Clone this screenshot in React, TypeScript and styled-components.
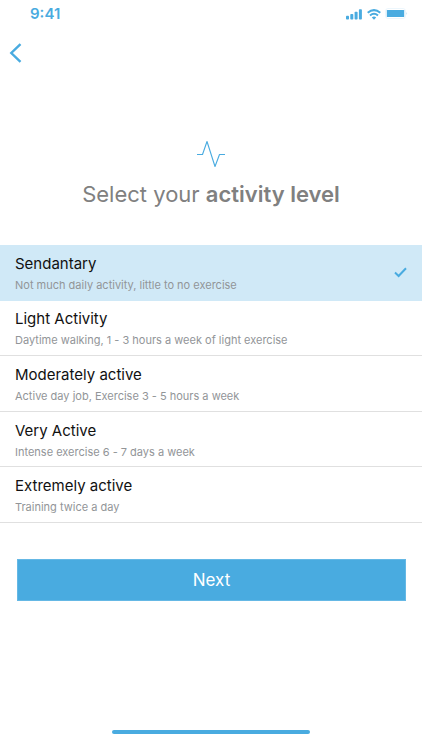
import { useState } from "react";
import styled, { createGlobalStyle } from "styled-components";

const blue = "#49abe0";

const GlobalStyle = createGlobalStyle`
  *, *::before, *::after { box-sizing: border-box; }
  body { margin: 0; background: #fff; font-family: Inter, sans-serif; }
`;

const Screen = styled.div`
  min-height: 100vh;
  display: flex;
  flex-direction: column;
  background: #fff;
`;

const StatusBar = styled.header`
  display: flex;
  align-items: center;
  justify-content: space-between;
  height: 28px;
  padding: 0 14px 0 30px;
  color: ${blue};
`;

const Clock = styled.time`
  font-size: 15px;
  line-height: 20px;
  font-weight: 600;
`;

const StatusIcons = styled.div`
  display: flex;
  align-items: center;
  gap: 4px;
`;

const Nav = styled.nav`
  display: flex;
  height: 50px;
  align-items: center;
`;

const BackButton = styled.button`
  display: flex;
  padding: 8px;
  border: 0;
  background: none;
  color: ${blue};
  cursor: pointer;
`;

const Form = styled.form`
  flex: 1;
  display: flex;
  flex-direction: column;
`;

const Intro = styled.div`
  display: flex;
  flex-direction: column;
  align-items: center;
  gap: 10px;
  padding: 62px 16px 35px;
  color: ${blue};
`;

const Title = styled.h1`
  margin: 0;
  color: #808080;
  font-size: 22px;
  line-height: 32px;
  font-weight: 400;
  text-align: center;

  strong { font-weight: 600; }
`;

const Options = styled.div`
  display: grid;
  grid-auto-rows: 1fr;
  min-height: 278px;
`;

const Option = styled.label<{ $selected: boolean }>`
  display: flex;
  align-items: center;
  justify-content: space-between;
  padding: 0 15px;
  border-bottom: 1px solid ${(p) => (p.$selected ? "#d0e9f7" : "#e0e0e0")};
  background: ${(p) => (p.$selected ? "#d0e9f7" : "#fff")};
  color: ${blue};
  cursor: pointer;
`;

const Radio = styled.input`
  appearance: none;
  width: 0;
  height: 0;
  margin: 0;
  outline: 0;
`;

const OptionText = styled.span`
  flex: 1;
  display: flex;
  flex-direction: column;
  gap: 2px;
  padding-top: 3px;
`;

const OptionName = styled.span`
  color: #111;
  font-size: 15px;
  line-height: 20px;
`;

const OptionDetail = styled.span`
  color: #929598;
  font-size: 11px;
  line-height: 18px;
`;

const NextButton = styled.button`
  margin: 36px 16px 0 17px;
  padding: 8px 16px;
  border: 1px solid #65b8e5;
  background: ${blue};
  color: #fff;
  font-family: inherit;
  font-size: 17px;
  line-height: 24px;
  cursor: pointer;
`;

const HomeArea = styled.footer`
  display: flex;
  justify-content: center;
  padding: 16px;
`;

const HomeIndicator = styled.div`
  width: 47vw;
  height: 4px;
  border-radius: 2px;
  background: ${blue};
`;

const levels = [
  { name: "Sendantary", detail: "Not much daily activity, little to no exercise" },
  { name: "Light Activity", detail: "Daytime walking, 1 - 3 hours a week of light exercise" },
  { name: "Moderately active", detail: "Active day job, Exercise 3 - 5 hours a week" },
  { name: "Very Active", detail: "Intense exercise 6 - 7 days a week" },
  { name: "Extremely active", detail: "Training twice a day" },
];

const SignalIcon = () => (
  <svg width="17" height="11" viewBox="0 0 17 11" fill="currentColor" aria-hidden="true">
    <rect x="0" y="6.8" width="3" height="3.7" rx=".8" />
    <rect x="4.3" y="5" width="3" height="5.5" rx=".8" />
    <rect x="8.6" y="2.8" width="3" height="7.7" rx=".8" />
    <rect x="12.9" y=".3" width="3" height="10.2" rx=".8" />
  </svg>
);

const WifiIcon = () => (
  <svg width="14" height="11" viewBox="0 0 14 11" fill="none" stroke="currentColor" strokeWidth="2" aria-hidden="true">
    <path d="M.7 3.8Q7-1.5 13.3 3.8M3 6.6Q7 3 11 6.6" />
    <path d="M4.8 8.4Q7 6.7 9.2 8.4L7 10.7Z" fill="currentColor" stroke="none" />
  </svg>
);

const BatteryIcon = () => (
  <svg width="23" height="12" viewBox="0 0 23 12" aria-hidden="true">
    <rect x=".5" y=".5" width="20" height="10" rx="2.5" fill="none" stroke={blue} strokeOpacity=".1" />
    <rect x="1.8" y="2" width="17.4" height="7" rx=".6" fill={blue} />
    <path d="M21.5 4q1.2 1.5 0 3z" fill={blue} fillOpacity=".5" />
  </svg>
);

const BackIcon = () => (
  <svg width="15" height="22" viewBox="0 0 15 22" fill="none" stroke="currentColor" strokeWidth="2.4" aria-hidden="true">
    <path d="M12.5 2.2 3.3 11l9.2 8.8" />
  </svg>
);

const PulseIcon = () => (
  <svg width="30" height="28" viewBox="0 0 30 28" fill="none" stroke="currentColor" strokeWidth="1.1" strokeLinejoin="round" aria-hidden="true">
    <path d="M1 14.5h5.5L11 1.5l8 25 4.5-12H29" />
  </svg>
);

const CheckIcon = () => (
  <svg width="13" height="11" viewBox="0 0 13 11" fill="none" stroke="currentColor" strokeWidth="2" aria-hidden="true">
    <path d="M1 5.6 4.6 9 12 1.2" />
  </svg>
);

export default function App() {
  const [selected, setSelected] = useState(levels[0].name);

  return (
    <Screen>
      <GlobalStyle />
      <StatusBar>
        <Clock>9:41</Clock>
        <StatusIcons>
          <SignalIcon />
          <WifiIcon />
          <BatteryIcon />
        </StatusIcons>
      </StatusBar>
      <Nav>
        <BackButton type="button" aria-label="Back">
          <BackIcon />
        </BackButton>
      </Nav>
      <Form onSubmit={(e) => e.preventDefault()}>
        <Intro>
          <PulseIcon />
          <Title id="activity-title">
            Select your <strong>activity level</strong>
          </Title>
        </Intro>
        <Options role="radiogroup" aria-labelledby="activity-title">
          {levels.map(({ name, detail }) => (
            <Option key={name} $selected={selected === name}>
              <Radio
                type="radio"
                name="activity"
                value={name}
                checked={selected === name}
                onChange={() => setSelected(name)}
              />
              <OptionText>
                <OptionName>{name}</OptionName>
                <OptionDetail>{detail}</OptionDetail>
              </OptionText>
              {selected === name && <CheckIcon />}
            </Option>
          ))}
        </Options>
        <NextButton type="submit">Next</NextButton>
      </Form>
      <HomeArea>
        <HomeIndicator />
      </HomeArea>
    </Screen>
  );
}
